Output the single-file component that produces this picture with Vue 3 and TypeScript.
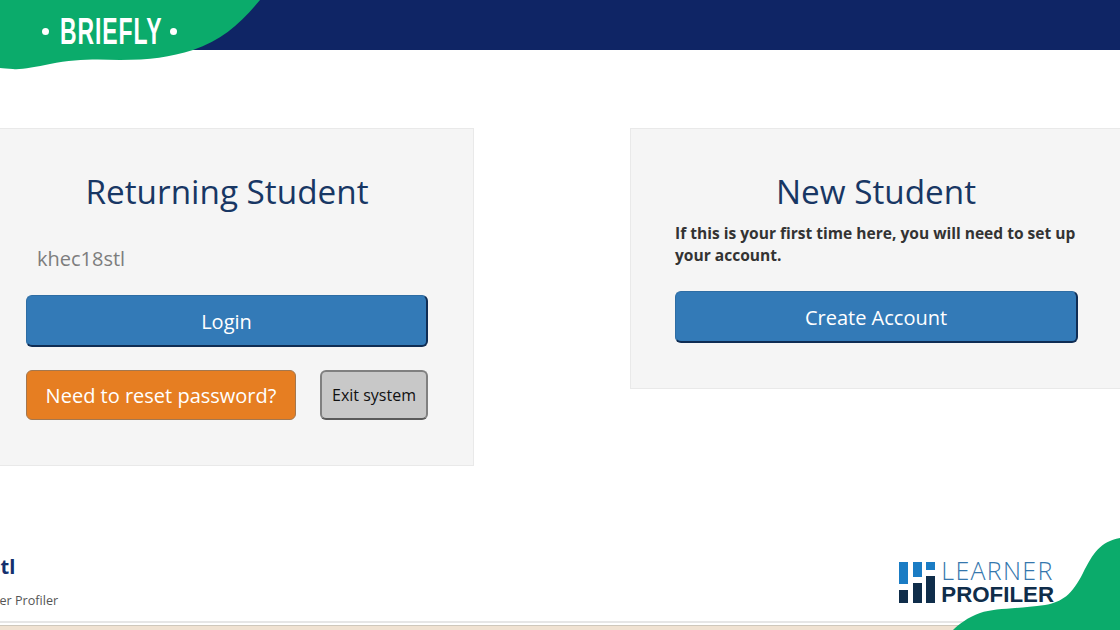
<script setup lang="ts">
const brand = 'BRIEFLY'
const username = 'khec18stl'
</script>

<template>
  <div class="page">
    <header class="topbar"></header>

    <!-- green wave with the brand sits over the navy bar -->
    <div class="brand">
      <svg class="brand-wave" width="262" height="72" viewBox="0 0 262 72">
        <path
          d="M0 0 H260 C240 24 222 40 193 50 C170 57 150 60 120 60 C95 59 75 59 50 64 C35 67 20 70 13 69 C8 69 3 68 0 68 Z"
          fill="#0bab6b"
        />
      </svg>
      <span class="brand-dot"></span>
      <span class="brand-name">{{ brand }}</span>
      <span class="brand-dot"></span>
    </div>

    <main class="panels">
      <section class="panel">
        <h2>Returning Student</h2>
        <div class="username">{{ username }}</div>
        <button class="btn btn-primary">Login</button>
        <div class="btn-row">
          <button class="btn btn-orange">Need to reset password?</button>
          <button class="btn btn-grey">Exit system</button>
        </div>
      </section>

      <section class="panel panel-new">
        <h2>New Student</h2>
        <p>If this is your first time here, you will need to set up your account.</p>
        <button class="btn btn-primary">Create Account</button>
      </section>
    </main>

    <footer class="foot">
      <div class="foot-user">
        <div class="foot-name">{{ username }}</div>
        <div class="foot-sub">Learner Profiler</div>
      </div>
      <div class="lp-logo">
        <svg width="38" height="44" viewBox="0 0 38 44">
          <rect x="0" y="0" width="9" height="22" fill="#1a7cc4" />
          <rect x="14" y="0" width="9" height="15" fill="#1a7cc4" />
          <rect x="27" y="0" width="9" height="8" fill="#1a7cc4" />
          <rect x="0" y="28" width="9" height="13" fill="#0f2d4a" />
          <rect x="14" y="21" width="9" height="20" fill="#0f2d4a" />
          <rect x="27" y="14" width="9" height="27" fill="#0f2d4a" />
        </svg>
        <div class="lp-text">
          <div class="lp-top">LEARNER</div>
          <div class="lp-bottom">PROFILER</div>
        </div>
      </div>
    </footer>

    <div class="page-edge"></div>

    <svg class="corner-wave" width="170" height="95" viewBox="0 0 170 95">
      <path
        d="M3 95 C8 90 18 82 30 78 C45 73 65 74 95 70 C112 67 122 60 133 38 C143 18 150 7 170 3 V95 Z"
        fill="#0bab6b"
      />
    </svg>
  </div>
</template>

<style scoped>
.page {
  position: relative;
  width: 1120px;
  height: 630px;
  overflow: hidden;
  display: flex;
  flex-direction: column;
  background: #fff;
  font-family: "Open Sans", "Liberation Sans", sans-serif;
}

.topbar {
  height: 50px;
  flex-shrink: 0;
  background: #0f2565;
}

.brand {
  position: absolute;
  left: 0;
  top: 0;
  width: 262px;
  height: 72px;
  display: flex;
  align-items: flex-start;
  padding: 13px 0 0 42px;
  box-sizing: border-box;
  gap: 11px;
}

.brand-wave {
  position: absolute;
  left: 0;
  top: 0;
}

.brand-name {
  position: relative;
  width: 102px;
  margin-right: -3px;
  font-family: "Liberation Sans", sans-serif;
  font-size: 37px;
  line-height: 37px;
  font-weight: 700;
  letter-spacing: 1.5px;
  color: #fff;
  white-space: nowrap;
  transform: scaleX(0.62);
  transform-origin: left center;
}

.brand-dot {
  position: relative;
  width: 7px;
  height: 7px;
  margin-top: 15px;
  border-radius: 50%;
  background: #fff;
}

.panels {
  display: flex;
  gap: 156px;
  margin: 78px 0 0 -19px;
  align-items: flex-start;
}

.panel {
  width: 493px;
  height: 338px;
  flex-shrink: 0;
  box-sizing: border-box;
  padding: 39px 45px 0 44px;
  background: #f5f5f5;
  border: 1px solid #e9e9e9;
}

.panel-new {
  height: 261px;
}

h2 {
  margin: 0;
  font-size: 33.3px;
  line-height: 46px;
  font-weight: 400;
  text-align: center;
  color: #183764;
}

.username {
  margin: 31px 0 0 11px;
  font-size: 20px;
  line-height: 28px;
  color: #7d7d7d;
}

.panel-new p {
  margin: 8px 0 25px;
  font-size: 15.55px;
  line-height: 22px;
  font-weight: 700;
  color: #333;
}

.btn {
  display: block;
  box-sizing: border-box;
  font-family: inherit;
  border-radius: 6px;
  text-align: center;
  padding: 0;
}

.btn-primary {
  width: 100%;
  height: 52px;
  padding-top: 1px;
  font-size: 20px;
  color: #fff;
  background: #337ab7;
  border: 1px solid #2e6da4;
  border-bottom: 2px solid #0f2d54;
  border-right: 2px solid #0f2d54;
}

.panel-new .btn-primary {
  width: 403px;
}

.panel .username + .btn-primary {
  margin-top: 22px;
}

.btn-row {
  display: flex;
  justify-content: space-between;
  margin-top: 23px;
}

.btn-orange {
  width: 270px;
  height: 50px;
  font-size: 20px;
  color: #fff;
  background: #e67e22;
  border: 1px solid #a3774f;
}

.btn-grey {
  width: 108px;
  height: 50px;
  font-size: 16px;
  color: #111;
  background: #c8c8c8;
  border: 2px solid #808080;
  border-bottom-color: #5a5a5a;
}

.foot {
  display: flex;
  justify-content: space-between;
  align-items: flex-start;
  margin-top: 87px;
}

.foot-user {
  margin-left: -80px;
}

.foot-name {
  font-size: 20px;
  line-height: 28px;
  font-weight: 700;
  color: #14306e;
}

.foot-sub {
  margin: 12px 0 0 46px;
  font-size: 12.6px;
  line-height: 16px;
  color: #555;
}

.lp-logo {
  display: flex;
  gap: 5px;
  margin: 9px 66px 0 0;
}

.lp-top {
  margin: -3px 0 3px -1px;
  font-family: "Open Sans", sans-serif;
  font-size: 25px;
  line-height: 22px;
  font-weight: 300;
  letter-spacing: 1.3px;
  color: #3577ad;
}

.lp-bottom {
  margin-left: -1px;
  font-family: "Liberation Sans", sans-serif;
  font-size: 22.3px;
  line-height: 22px;
  font-weight: 700;
  color: #0f2d4a;
}

.corner-wave {
  position: absolute;
  right: 0;
  bottom: 0;
}

.page-edge {
  position: absolute;
  left: 0;
  right: 0;
  bottom: 0;
  height: 9px;
  background: linear-gradient(#e6e6e6 0 2px, #fff 2px 4px, #cfc8bc 4px 5px, #f0e2d2 5px);
}
</style>
